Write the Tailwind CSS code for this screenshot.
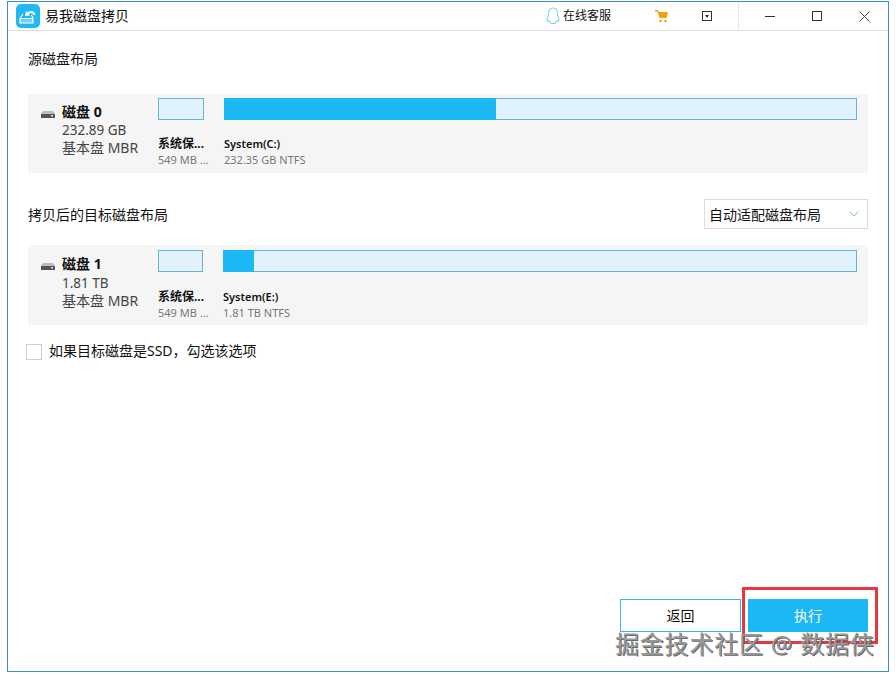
<!DOCTYPE html>
<html><head><meta charset="utf-8"><script src="https://cdn.jsdelivr.net/npm/@tailwindcss/browser@4"></script></head>
<body class="bg-white w-[896px] h-[679px] overflow-hidden relative font-['Noto_Sans','Noto_Sans_CJK_SC',sans-serif] text-[#111]">
<div class="ml-[7px] mt-px w-[882px] h-[671px] border border-[#3f8dc1] flex flex-col bg-white">
  <div class="h-[29px] shrink-0 border-b border-[#dcdfe3] flex items-center">
    <div class="w-[24px] h-[24px] ml-[8px] rounded-[5px] bg-[#22b8f5] flex items-center justify-center">
      <svg width="19" height="16" viewBox="0 0 19 16" fill="none" stroke="white" stroke-width="1.200"><path d="M1 15h13v-4.500H1z" fill="white" fill-opacity=".35"/><path d="M1 10.500 4 6M14 10.500 12.500 7"/><path d="M16.500 7C16 3 11.500 1.500 8.500 4.500L7 3 6 8l5-.5-1.300-1.500C11.500 4.500 14 5 14.500 7z" fill="white" stroke="none"/></svg>
    </div>
    <span class="ml-[5px] text-[14px] leading-none">易我磁盘拷贝</span>
    <div class="ml-auto flex items-center h-full">
      <svg width="14" height="18" viewBox="0 0 14 18" fill="none" stroke="#7fd3f2" stroke-width="1.100"><path d="M7 1C3.800 1 2.600 3.600 2.600 6.500 2.600 9 1 10.500 1 13c0 1.500 1 1.600 2 .8.500 1.600 2.200 2.700 4 2.700s3.500-1.100 4-2.700c1 .8 2 .7 2-.8 0-2.500-1.600-4-1.600-6.500C11.400 3.600 10.200 1 7 1z"/></svg>
      <span class="ml-[3px] text-[12px] leading-none w-[49px]">在线客服</span>
      <svg class="ml-[43px]" width="14" height="14" viewBox="0 0 14 14"><path d="M0 1h3l1 2h9l-1.500 6H4.500L2.500 2.500H0z" fill="#f2a20c"/><circle cx="5.500" cy="12" r="1.300" fill="#f2a20c"/><circle cx="10.500" cy="12" r="1.300" fill="#f2a20c"/></svg>
      <div class="ml-[33px] w-[10px] h-[10px] border border-[#333] flex items-center justify-center"><div class="w-0 h-0 border-x-[2.500px] border-x-transparent border-t-[3px] border-t-[#333]"></div></div>
      <div class="ml-[26px] w-px h-full bg-[#e3e5e8]"></div>
      <div class="ml-[26px] w-[10px] h-px bg-[#333]"></div>
      <div class="ml-[37px] w-[10px] h-[10px] border border-[#333]"></div>
      <svg class="ml-[37px] mr-[18px]" width="11" height="11" viewBox="0 0 11 11" stroke="#444" stroke-width="1"><path d="M.5.5l10 10M10.500.5l-10 10"/></svg>
    </div>
  </div>
  <div class="flex-1 pl-[20px] pr-[20px] flex flex-col">
    <div class="h-[57px] pt-[19px] text-[14px] leading-[18px]">源磁盘布局</div>
    <div class="mt-[6px] h-[79px] bg-[#f5f5f5] flex shrink-0">
      <div class="w-[130px] relative pl-[34px] pt-[9px] flex flex-col">
        <svg class="absolute left-[13px] top-[17px]" width="14" height="7" viewBox="0 0 14 7"><path d="M2 0h10l2 3v4H0V3z" fill="#bbb"/><rect y="3" width="14" height="4" fill="#555"/><rect x="10" y="4" width="2" height="1.500" fill="#ddd"/></svg>
        <span class="text-[14px] leading-[18px] font-bold">磁盘 0</span>
        <span class="text-[13.500px] leading-[18px] text-[#444]">232.89 GB</span>
        <span class="text-[14px] leading-[18px] text-[#444]">基本盘 MBR</span>
      </div>
      <div class="w-[46px] pt-[4px]">
        <div class="h-[22px] bg-[#e1f2fc] border border-[#68b4cc]"></div>
        <div class="mt-[16px] text-[12px] leading-[16px] font-bold whitespace-nowrap">系统保...</div>
        <div class="text-[11px] leading-[16px] text-[#777] whitespace-nowrap">549 MB ...</div>
      </div>
      <div class="ml-[20px] w-[633px] pt-[4px]">
        <div class="h-[22px] bg-[#e1f2fc] border border-[#68b4cc] flex"><div class="w-[272px] -m-px h-[22px] bg-[#1cb8f5]"></div></div>
        <div class="mt-[16px] text-[11px] leading-[16px] font-semibold">System(C:)</div>
        <div class="text-[11px] leading-[16px] text-[#777]">232.35 GB NTFS</div>
      </div>
    </div>
    <div class="mt-[26px] h-[30px] flex items-center justify-between shrink-0">
      <span class="text-[14px]">拷贝后的目标磁盘布局</span>
      <div class="w-[164px] h-[30px] border border-[#dcdcdc] pl-[4px] pr-[8px] flex items-center justify-between">
        <span class="text-[14px]">自动适配磁盘布局</span>
        <svg width="10" height="6" viewBox="0 0 10 6" fill="none" stroke="#7cc4c0"><path d="M.5.5 5 5 9.500.5"/></svg>
      </div>
    </div>
    <div class="mt-[16px] h-[80px] bg-[#f5f5f5] flex shrink-0">
      <div class="w-[130px] relative pl-[34px] pt-[10px] flex flex-col">
        <svg class="absolute left-[13px] top-[18px]" width="14" height="7" viewBox="0 0 14 7"><path d="M2 0h10l2 3v4H0V3z" fill="#bbb"/><rect y="3" width="14" height="4" fill="#555"/><rect x="10" y="4" width="2" height="1.500" fill="#ddd"/></svg>
        <span class="text-[14px] leading-[18px] font-bold">磁盘 1</span>
        <span class="text-[13.500px] leading-[18px] mt-px text-[#444]">1.81 TB</span>
        <span class="text-[14px] leading-[18px] text-[#444]">基本盘 MBR</span>
      </div>
      <div class="w-[45px] pt-[5px]">
        <div class="h-[22px] bg-[#e1f2fc] border border-[#68b4cc]"></div>
        <div class="mt-[17px] text-[12px] leading-[16px] font-bold whitespace-nowrap">系统保...</div>
        <div class="text-[11px] leading-[16px] text-[#777] whitespace-nowrap">549 MB ...</div>
      </div>
      <div class="ml-[20px] w-[634px] pt-[5px]">
        <div class="h-[22px] bg-[#e1f2fc] border border-[#68b4cc] flex"><div class="w-[31px] -m-px h-[22px] bg-[#1cb8f5]"></div></div>
        <div class="mt-[17px] text-[11px] leading-[16px] font-semibold">System(E:)</div>
        <div class="text-[11px] leading-[16px] text-[#777]">1.81 TB NTFS</div>
      </div>
    </div>
    <div class="mt-[18px] -ml-[2px] flex items-center h-[18px] shrink-0">
      <div class="w-[16px] h-[16px] border border-[#cfcfcf] bg-white"></div>
      <span class="ml-[7px] mb-[3px] text-[14px]">如果目标磁盘是SSD，勾选该选项</span>
    </div>
    <div class="mt-auto mb-[39px] flex justify-end gap-[7px]">
      <button class="w-[121px] h-[33px] border border-[#35b4e8] text-[14px] bg-white">返回</button>
      <button class="w-[120px] h-[33px] bg-[#1cb8f5] text-white text-[14px]">执行</button>
    </div>
  </div>
</div>
<div class="absolute left-[742px] top-[587px] w-[136px] h-[57px] border-[3px] border-[#e8373f]"></div>
<div class="absolute left-[615px] top-[629px] text-[24px] leading-[30px] whitespace-nowrap text-[#999] [text-shadow:1px_1px_0_#666] tracking-[0.8px]">掘金技术社区 @ 数据侠</div>
</body></html>
